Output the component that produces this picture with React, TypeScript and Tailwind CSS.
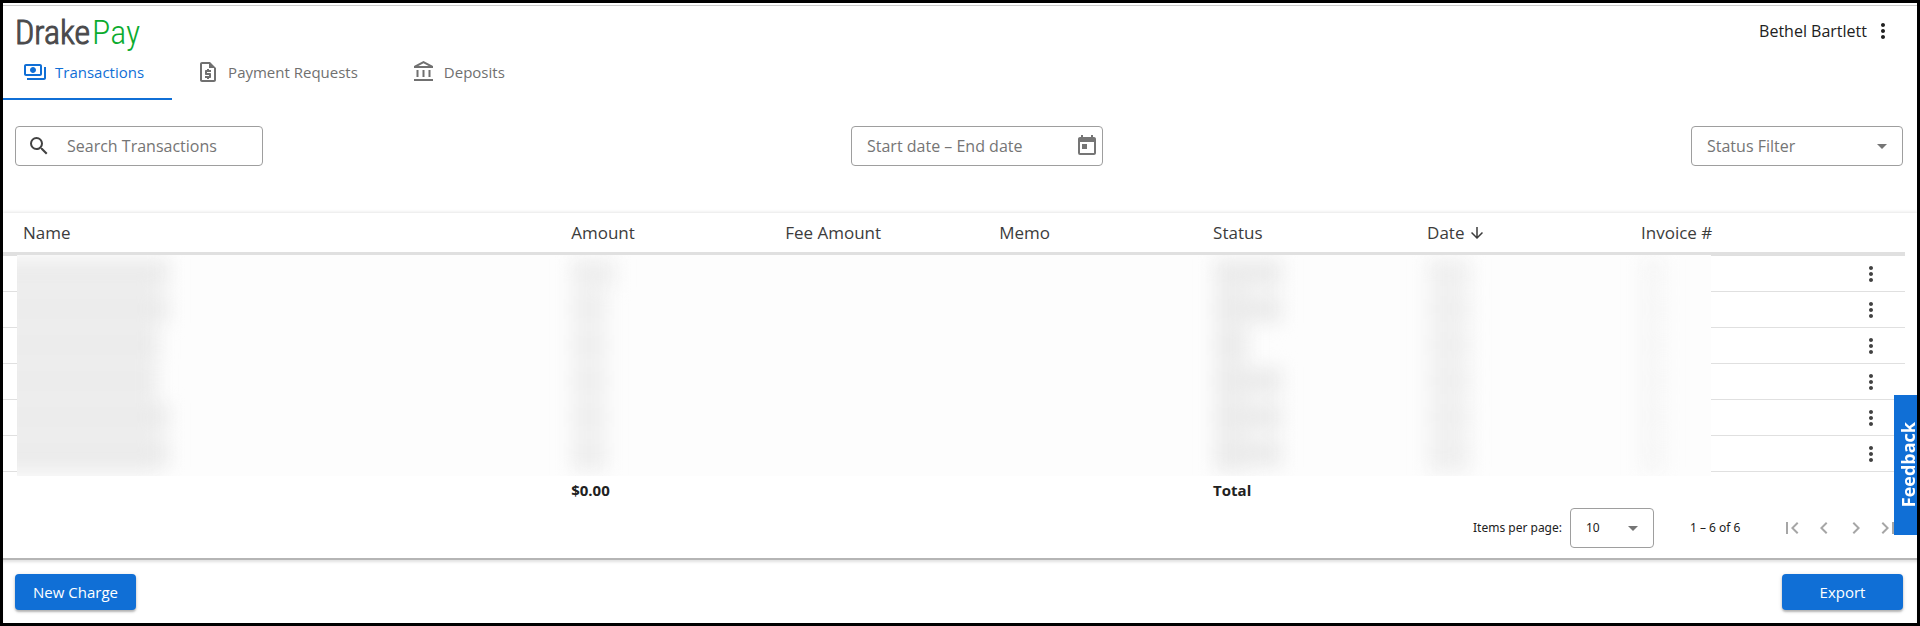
import { useState } from "react";
import {
  MdArrowDownward,
  MdArrowDropDown,
  MdChevronLeft,
  MdChevronRight,
  MdFirstPage,
  MdLastPage,
  MdMoreVert,
  MdOutlineAccountBalance,
  MdOutlinePayments,
  MdOutlineRequestQuote,
  MdSearch,
  MdToday,
} from "react-icons/md";

const tabs = [
  { label: "Transactions", icon: MdOutlinePayments, pad: "pl-5 pr-7" },
  { label: "Payment Requests", icon: MdOutlineRequestQuote, pad: "pl-6 pr-[30px]" },
  { label: "Deposits", icon: MdOutlineAccountBalance, pad: "pl-6 pr-6" },
];

const columns = ["Name", "Amount", "Fee Amount", "Memo", "Status", "Date", "Invoice #"];

type Row = { name: number; amount: number; status: number };

const rows: Row[] = [
  { name: 172, amount: 44, status: 68 },
  { name: 172, amount: 36, status: 68 },
  { name: 162, amount: 36, status: 34 },
  { name: 160, amount: 36, status: 68 },
  { name: 172, amount: 36, status: 68 },
  { name: 172, amount: 36, status: 68 },
];

function Redacted({ width, track, tone }: { width: number; track: string; tone: string }) {
  return (
    <div className={`h-9 shrink-0 bg-current ${track}`}>
      <div className={`mt-1 h-7 ${tone}`} style={{ width }} />
    </div>
  );
}

function Header() {
  return (
    <header className="flex h-[50px] items-center justify-between pl-3 pr-[22px]">
      <a href="#home" className="flex gap-[2px] whitespace-nowrap pt-[2px] font-['Roboto_Condensed',sans-serif] text-[34px] leading-none font-light">
        <span className="text-[#4a4a4c] [-webkit-text-stroke:1px_#4a4a4c]">Drake</span>
        <span className="text-[#0bab2e]">Pay</span>
      </a>
      <div className="flex items-center gap-1 text-[#212121]">
        <span>Bethel Bartlett</span>
        <button type="button" aria-label="Account menu">
          <MdMoreVert size={24} />
        </button>
      </div>
    </header>
  );
}

function Tabs() {
  const [active, setActive] = useState("Transactions");
  return (
    <nav className="flex" role="tablist">
      {tabs.map(({ label, icon: Icon, pad }) => (
        <button
          key={label}
          type="button"
          role="tab"
          aria-selected={active === label}
          onClick={() => setActive(label)}
          className={`flex h-11 items-center gap-2 border-b-2 pb-[10px] text-[15px] ${pad} ${
            active === label ? "border-[#106fd6] text-[#106fd6]" : "border-transparent text-[#707070]"
          }`}
        >
          <Icon size={24} />
          {label}
        </button>
      ))}
    </nav>
  );
}

function Toolbar() {
  return (
    <div className="flex items-center justify-between px-3 pr-[14px] pt-[26px] pb-[47px]">
      <label className="flex h-10 w-[248px] items-center gap-4 rounded border border-[#9e9e9e] px-[11px]">
        <MdSearch size={24} className="shrink-0 text-[#424242]" />
        <input
          type="text"
          aria-label="Search Transactions"
          placeholder="Search Transactions"
          className="w-full min-w-0 bg-transparent outline-none placeholder:text-[#757575]"
        />
      </label>
      <div className="flex h-10 w-[252px] items-center rounded border border-[#9e9e9e] pl-[15px] pr-[3px]">
        <input
          type="text"
          aria-label="Date range"
          placeholder="Start date – End date"
          className="w-full min-w-0 bg-transparent outline-none placeholder:text-[#757575]"
        />
        <button type="button" aria-label="Open calendar" className="shrink-0 text-[#757575]">
          <MdToday size={24} />
        </button>
      </div>
      <div className="grid h-10 w-[212px] items-center rounded border border-[#9e9e9e]">
        <select
          aria-label="Status Filter"
          className="col-start-1 row-start-1 h-full w-full appearance-none bg-transparent pl-[15px] text-[#757575] outline-none"
        >
          <option>Status Filter</option>
        </select>
        <MdArrowDropDown size={24} className="pointer-events-none col-start-1 row-start-1 mr-2 justify-self-end text-[#757575]" />
      </div>
    </div>
  );
}

function RedactionPanel() {
  return (
    <div className="absolute top-[42px] right-[194px] bottom-8 left-[14px] overflow-hidden bg-[#fdfdfd]">
      <div className="-ml-5 blur-[9px]">
        {rows.map((row, i) => (
          <div key={i} className="flex h-9">
            <div className="flex-1 text-[#f1f1f1]">
              <Redacted width={row.name} track="w-[160px]" tone="bg-[#ebebeb]" />
            </div>
            <div className="w-[37.5%] text-[#f6f6f6]">
              <Redacted width={row.amount} track="w-9" tone="bg-[#eeeeee]" />
            </div>
            <div className="w-[12.5%] text-[#f3f3f3]">
              <Redacted width={row.status} track="w-[34px]" tone="bg-[#ebebeb]" />
            </div>
            <div className="w-[12.5%] text-[#f4f4f4]">
              <Redacted width={42} track="w-10" tone="bg-[#efefef]" />
            </div>
            <div className="w-[4%] text-[#f8f8f8]">
              <Redacted width={22} track="w-5" tone="bg-[#f5f5f5]" />
            </div>
          </div>
        ))}
      </div>
    </div>
  );
}

function TransactionsTable() {
  return (
    <div className="shadow-[0_-1px_3px_rgba(0,0,0,0.1)]">
      <div className="relative mr-3">
        <table className="w-full table-fixed border-separate border-spacing-0 text-left">
          <colgroup>
            <col />
            <col className="w-[11.25%]" />
            <col className="w-[11.25%]" />
            <col className="w-[11.25%]" />
            <col className="w-[11.25%]" />
            <col className="w-[11.25%]" />
            <col className="w-[11.25%]" />
            <col className="w-[50px]" />
          </colgroup>
          <thead>
            <tr className="h-[43px] text-[17px] text-[#3c3c3c]">
              {columns.map((name) => (
                <th key={name} scope="col" className="border-b-4 border-[#e0e0e0] p-0 font-normal first:pl-5">
                  <span className="flex items-center gap-1">
                    {name}
                    {name === "Date" && <MdArrowDownward size={18} />}
                  </span>
                </th>
              ))}
              <td className="border-b-4 border-[#e0e0e0] p-0" />
            </tr>
          </thead>
          <tbody>
            {rows.map((_, i) => (
              <tr key={i} className="h-9">
                {columns.map((name) => (
                  <td key={name} className="border-b border-[#e0e0e0] p-0" />
                ))}
                <td className="border-b border-[#e0e0e0] p-0 align-middle">
                  <button type="button" aria-label="Row menu" className="ml-1 block text-[#424242]">
                    <MdMoreVert size={24} />
                  </button>
                </td>
              </tr>
            ))}
          </tbody>
          <tfoot>
            <tr className="h-9 text-[15px] font-bold text-[#212121]">
              <td className="p-0" />
              <td className="p-0">$0.00</td>
              <td className="p-0" />
              <td className="p-0" />
              <td className="p-0">Total</td>
              <td className="p-0" />
              <td className="p-0" />
              <td className="p-0" />
            </tr>
          </tfoot>
        </table>
        <RedactionPanel />
      </div>
    </div>
  );
}

function Paginator() {
  return (
    <div className="flex items-center justify-end bg-white pr-[17px] pb-[10px] font-['Noto_Sans',sans-serif] text-xs text-[#212121]">
      <label htmlFor="page-size">Items per page:</label>
      <div className="ml-2 grid h-10 w-[84px] items-center rounded border border-[#9e9e9e]">
        <select
          id="page-size"
          className="col-start-1 row-start-1 h-full w-full appearance-none bg-transparent pl-[15px] outline-none"
        >
          <option>10</option>
        </select>
        <MdArrowDropDown size={24} className="pointer-events-none col-start-1 row-start-1 mr-2 justify-self-end text-[#757575]" />
      </div>
      <span className="mx-9 min-w-[54px]">1 – 6 of 6</span>
      <div className="flex gap-2 text-[#a6a6a6]">
        <button type="button" aria-label="First page"><MdFirstPage size={24} /></button>
        <button type="button" aria-label="Previous page"><MdChevronLeft size={24} /></button>
        <button type="button" aria-label="Next page"><MdChevronRight size={24} /></button>
        <button type="button" aria-label="Last page"><MdLastPage size={24} /></button>
      </div>
    </div>
  );
}

function ActionButton({ children }: { children: string }) {
  return (
    <button
      type="button"
      className="h-9 w-[121px] rounded bg-[#106fd6] text-[15px] text-white shadow-[0_2px_2px_rgba(0,0,0,0.22),0_1px_4px_rgba(0,0,0,0.15)]"
    >
      {children}
    </button>
  );
}

export default function App() {
  return (
    <div className="relative flex min-h-screen flex-col border-[3px] border-black bg-white pt-[2px] font-['Open_Sans',sans-serif] text-base">
      <div className="border-t border-[#cccccc]">
        <Header />
        <Tabs />
      </div>
      <main>
        <Toolbar />
        <TransactionsTable />
        <Paginator />
      </main>
      <footer className="flex flex-1 items-start justify-between border-t-2 border-[#b5b5b5] bg-white px-3 pr-[14px] pt-[14px] pb-3 shadow-[inset_0_3px_3px_-1px_rgba(0,0,0,0.12)]">
        <ActionButton>New Charge</ActionButton>
        <ActionButton>Export</ActionButton>
      </footer>
      <button
        type="button"
        className="absolute top-[392px] right-0 flex h-[140px] w-[23px] items-center justify-center bg-[#106fd6] pl-1 text-lg font-bold text-white"
      >
        <span className="rotate-180 [writing-mode:vertical-rl]">Feedback</span>
      </button>
    </div>
  );
}
